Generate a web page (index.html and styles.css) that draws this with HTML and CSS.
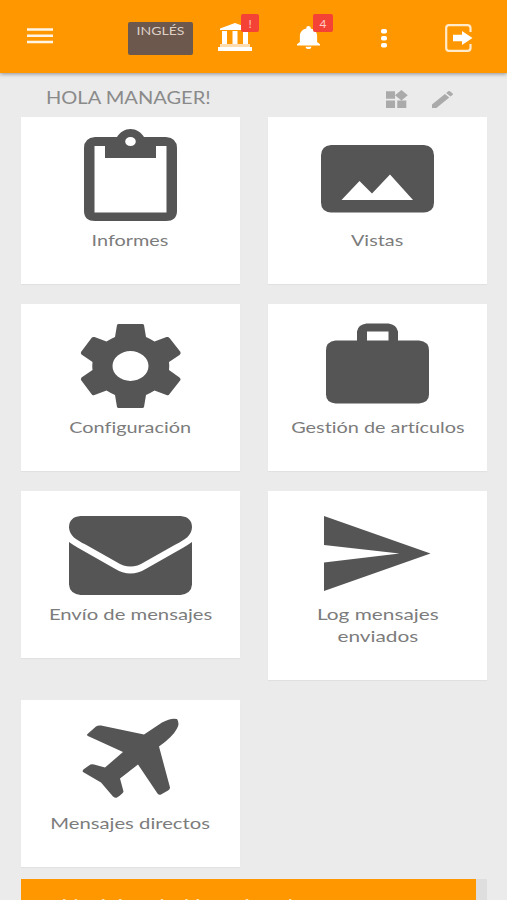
FILE: index.html
```html
<!DOCTYPE html>
<html lang="es">
<head>
<meta charset="utf-8">
<title>Panel</title>
<link rel="stylesheet" href="styles.css">
</head>
<body>
<header class="bar">
  <svg class="menu" viewBox="0 0 26 16"><path d="M0 1.500h26M0 7.800h26M0 14h26" stroke="#fff" stroke-opacity=".9" stroke-width="2.500"/></svg>
  <button class="lang"><span class="wide lang-text">INGLÉS</span></button>
  <div class="bank-wrap">
    <svg class="bank" viewBox="0 0 34 29"><path d="M17 0 32 5.500V7H2V5.500zM4 8h5v13H4zM14.500 8h5v13h-5zM25 8h5v13h-5zM0 24h34v4H0z" fill="#fff"/><path d="M2 21h30v3H2z" fill="#ffdcae"/></svg>
    <span class="badge badge-alert">!</span>
  </div>
  <div class="bell-wrap">
    <svg class="bell" viewBox="4 2.500 16 19.500" preserveAspectRatio="none"><path fill="#fff" d="M12 22c1.100 0 2-.9 2-2h-4c0 1.100.9 2 2 2zm6-6v-5c0-3.070-1.640-5.640-4.500-6.320V4c0-.83-.67-1.500-1.500-1.500s-1.500.67-1.500 1.500v.68C7.630 5.360 6 7.920 6 11v5l-2 2v1h16v-1l-2-2z"/></svg>
    <span class="badge badge-count">4</span>
  </div>
  <svg class="dots" viewBox="0 0 6 19"><g fill="#fff"><rect width="6" height="4.600" rx="1.800"/><rect y="7" width="6" height="4.600" rx="1.800"/><rect y="14" width="6" height="4.600" rx="1.800"/></g></svg>
  <svg class="exit" viewBox="0 0 28 28"><path d="M25.500 8V4q0-2.800-3-2.800H4Q1.200 1.200 1.200 4v20q0 2.800 2.800 2.800h18.500q3 0 3-2.800v-4" fill="none" stroke="#fff" stroke-opacity=".8" stroke-width="2.200"/><path d="M8 10.800h9V7l10.500 7L17 21v-3.800H8z" fill="#fff"/></svg>
</header>
<main>
  <div class="greeting">
    <h1><span class="wide hello">HOLA MANAGER!</span></h1>
    <svg class="widgets" viewBox="3 1.660 19.500 19.340" preserveAspectRatio="none"><path fill="#aaa" d="M13 13v8h8v-8h-8zM3 21h8v-8H3v8zM3 3v8h8V3H3zm13.660-1.310L11 7.340 16.660 13l5.660-5.660-5.660-5.650z"/></svg>
    <svg class="pencil" viewBox="3 3 18 18" preserveAspectRatio="none"><path fill="#aaa" d="M3 17.250V21h3.750L17.810 9.940l-3.750-3.750L3 17.250zM20.710 7.040c.39-.39.39-1.020 0-1.410l-2.340-2.340c-.39-.39-1.020-.39-1.410 0l-1.830 1.830 3.750 3.750 1.830-1.830z"/></svg>
  </div>
  <section class="grid">
    <a class="card"><svg viewBox="0 0 124 92"><path fill-rule="evenodd" d="M25 8H33C36 3 41 0 46.500 0S57 3 60 8H82Q93 9 93 19V82Q93 92 82 92H11Q0 92 0 82V19Q0 9 11 8ZM10.500 17V83.500H82.500V17H72V29H21V17ZM46.500 8A5.300 4.500 0 1 0 46.500 17A5.300 4.500 0 1 0 46.500 8Z" transform="translate(16)"/></svg><span class="wide">Informes</span></a>
    <a class="card"><svg viewBox="0 0 124 92"><path fill-rule="evenodd" d="M15.500 16.500H108.500Q118.500 17.500 118.500 27V74Q118.500 83 108.500 84H15.500Q5.500 83 5.500 74V27Q5.500 17.500 15.500 16.500ZM26 71.500H97.500L74.500 46 56.500 65 44 52.500Z" transform="translate(-.5 -.5)"/></svg><span class="wide">Vistas</span></a>
    <a class="card"><svg viewBox="0 0 124 92"><path transform="translate(.5)" fill-rule="evenodd" d="M50 8H74Q75 8 75.500 9L77.500 21Q82 23 86 25.500L98 21Q100 20.500 101 22L112 36Q112.500 38 111 39L100.500 46Q101 50 100.500 54L111 61.500Q112.500 63 112 64L101 78Q100 80 98 79L86 74.500Q82 77 77.500 79L75.500 91Q75 92 74 92H50Q49 92 48.500 91L46.500 79Q42 77 38 74.500L26 79Q24 80 23 78L12.500 64Q12 63 13 61.500L24 54Q23.500 50 24 46L13 38.500Q12 37 12.500 36L23 22Q24 20.500 26 21L38 25.500Q42 23 46.500 21L48.500 9Q49 8 50 8ZM62 35A18 15 0 1 0 62 65A18 15 0 1 0 62 35Z"/></svg><span class="wide">Configuración</span></a>
    <a class="card"><svg viewBox="0 0 124 92"><path transform="translate(-.5 -.5)" fill-rule="evenodd" d="M20 25H41.500V16Q42.500 9 51 8H73Q81 9 82.500 16V25H103.500Q113.500 26 113.500 35V79Q113.500 87 103.500 88H20Q10.500 87 10.500 79V35Q10.500 26 20 25ZM51.500 25H73V16H51.500Z"/></svg><span class="wide">Gestión de artículos</span></a>
    <a class="card"><svg viewBox="0 0 124 92"><path transform="translate(.5 -.5)" d="M12 13.500H112Q123.500 14.500 123.500 25C123 33 117 37 107 42L76 59.500Q62 68.500 48 59.500L17 42C7 37 1 33 .5 25Q.5 14.500 12 13.500ZM.5 39.500Q4 42 9 45L46 66Q62 76 78 66L115 45Q120 42 123.500 39.500V82Q123 91 112 92.500H12Q1 91 .5 82Z"/></svg><span class="wide wider">Envío de mensajes</span></a>
    <a class="card"><svg viewBox="0 0 124 92"><path transform="translate(-.5 -.5)" d="M8.500 13.500 115 51 8.500 88.500V60L84 51 8.500 42.500Z"/></svg><span class="wide widest">Log mensajes<br>enviados</span></a>
    <a class="card"><svg viewBox="0 0 124 92"><path transform="translate(-1 -1.500)" d="M20.500 23.500 29 16Q31 14.500 34 15L77 24 95 12Q104 7 110 8.500Q113 13 110 18Q106 26 92 36L103 77Q103 79 101 80L94 84Q92 85 90.500 83L71 54 53 68 56.500 81Q56 83 50 87Q48.500 88 46 86L34 72 16 61.500Q15 60 17 58.500L22 55Q24 53 27 54L38 57 56 41.500 22 26Q19 25 20.500 23.500Z"/></svg><span class="wide wider">Mensajes directos</span></a>
  </section>
  <section class="news"><h2><span class="wide news-text">Noticias de Usuarios de</span></h2></section>
</main>
</body>
</html>
```
FILE: styles.css
```css
* { box-sizing: border-box; }
body { margin: 0; height: 900px; overflow: hidden; background: #ebebeb; font-family: Lato, "Liberation Sans", sans-serif; color: #7c7c7c; font-variant-ligatures: none; }
svg { display: block; flex: none; overflow: visible; }
.wide { display: inline-block; white-space: nowrap; transform: scaleX(1.24); }
.wide.wider { transform: scaleX(1.265); }
.wide.widest { transform: scaleX(1.3); }
.bar { height: 73px; background: #ff9800; display: flex; align-items: flex-start; padding-left: 27px; box-shadow: 0 1px 4px rgba(0,0,0,.4); position: relative; }
.menu { width: 26px; height: 16px; margin-top: 27.5px; }
.lang { width: 65px; height: 33px; margin: 22px 0 0 75px; padding: 2px 0 0; border: 0; border-radius: 2px; background: #6c584c; color: #ddd0c5; font: 12px/14px Lato, sans-serif; display: flex; justify-content: center; align-items: flex-start; }
.wide.lang-text { transform: scaleX(1.17); }
.bank-wrap { position: relative; margin: 23px 0 0 25px; }
.bank { width: 34px; height: 29px; }
.bell-wrap { position: relative; margin: 26px 0 0 45px; }
.bell { width: 23px; height: 23px; }
.badge { position: absolute; height: 18px; border-radius: 2px; background: #f44336; color: #ffc9c2; font-size: 12px; line-height: 19px; text-align: center; }
.badge-alert { left: 23px; top: -9px; width: 18px; }
.badge-count { left: 16px; top: -12px; width: 20px; }
.dots { width: 6px; height: 19px; margin: 28.5px 0 0 61px; }
.exit { width: 28px; height: 28px; margin: 24px 0 0 58px; }
main { padding: 0 20px 0 21px; }
.greeting { height: 44px; display: flex; align-items: flex-start; padding-left: 25px; }
h1 { margin: 15px 0 0; width: 340px; font-size: 17px; line-height: 20px; font-weight: 400; color: #8a8a8a; }
.wide.hello { transform: scaleX(1.18); transform-origin: left; }
.widgets { width: 22px; height: 18px; margin-top: 17px; }
.pencil { width: 21px; height: 17px; margin: 18px 0 0 24px; }
.grid { display: grid; grid-template-columns: 218.5px 219px; column-gap: 28.5px; row-gap: 20px; align-items: start; }
.card { min-height: 167px; padding: 12px 0 33px; background: #fff; box-shadow: 0 1px 1px rgba(0,0,0,.04); display: flex; flex-direction: column; align-items: center; font-size: 16px; line-height: 22px; text-align: center; }
.card svg { width: 124px; height: 92px; margin-bottom: 8px; fill: #555; }
.news { width: 455px; height: 32px; margin-top: 12px; padding: 14px 0 0 40px; background: #ff9800; box-shadow: 11px 0 0 #dedede; }
h2 { margin: 0; font-size: 18px; line-height: 24px; font-weight: 400; color: #ffe0b2; }
.wide.news-text { transform: scaleX(1.32); transform-origin: left; }
```
